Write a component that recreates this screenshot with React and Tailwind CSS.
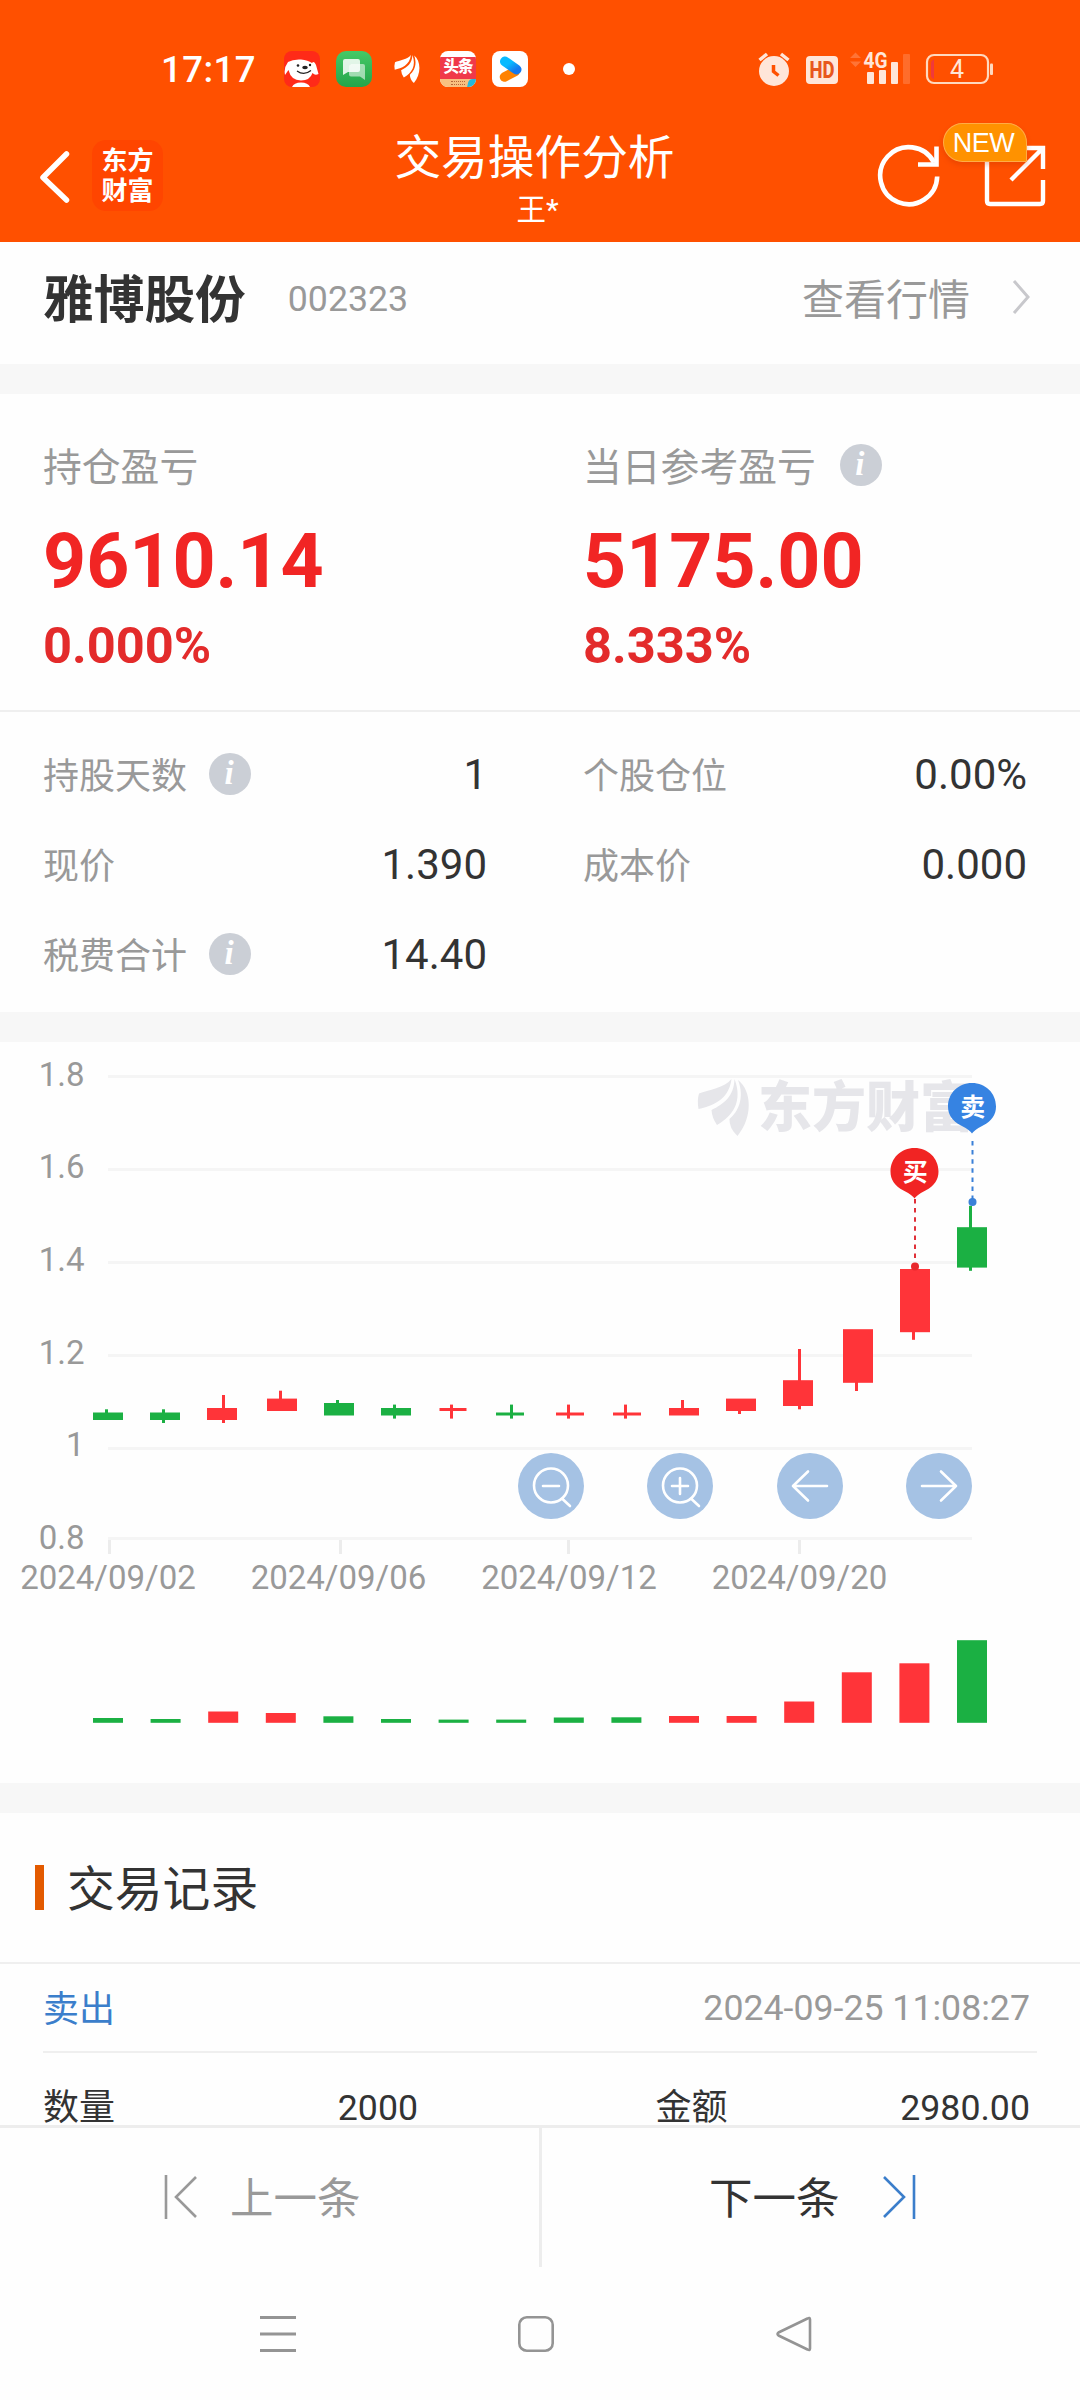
import React from "react";

const RED = "#ff3439";
const GREEN = "#1bb043";

/* x: left edge of the body, w: body width, top/bottom: body, hi/lo: wick ends, wx: wick left edge */
const candles = [
  { c: GREEN, x: 93, w: 30, top: 1412.5, bottom: 1420, hi: 1409.3, lo: 1420, wx: 105 },
  { c: GREEN, x: 150, w: 30, top: 1412.5, bottom: 1420, hi: 1409.3, lo: 1423, wx: 162 },
  { c: RED, x: 207, w: 30, top: 1408, bottom: 1420, hi: 1395, lo: 1423, wx: 222 },
  { c: RED, x: 267, w: 30, top: 1398.6, bottom: 1411, hi: 1390.7, lo: 1411, wx: 279 },
  { c: GREEN, x: 324, w: 30, top: 1403, bottom: 1415.5, hi: 1400, lo: 1415, wx: 336 },
  { c: GREEN, x: 381, w: 30, top: 1408, bottom: 1415.5, hi: 1404.6, lo: 1418.6, wx: 393 },
  { c: RED, x: 439.5, w: 27, top: 1408, bottom: 1411, hi: 1404.6, lo: 1418.6, wx: 450 },
  { c: GREEN, x: 496, w: 28, top: 1412.5, bottom: 1415.5, hi: 1404.6, lo: 1418.6, wx: 510 },
  { c: RED, x: 556, w: 28, top: 1412.5, bottom: 1415.5, hi: 1404.6, lo: 1418.6, wx: 567 },
  { c: RED, x: 613, w: 28, top: 1412.5, bottom: 1415.5, hi: 1404.6, lo: 1418.6, wx: 624 },
  { c: RED, x: 669, w: 30, top: 1408, bottom: 1415.5, hi: 1400, lo: 1415, wx: 681 },
  { c: RED, x: 726, w: 30, top: 1398.6, bottom: 1411, hi: 1399, lo: 1414, wx: 738 },
  { c: RED, x: 783, w: 30, top: 1380.2, bottom: 1406, hi: 1349, lo: 1409.3, wx: 798 },
  { c: RED, x: 843, w: 30, top: 1329.2, bottom: 1382.8, hi: 1330, lo: 1391, wx: 855 },
  { c: RED, x: 900, w: 30, top: 1269, bottom: 1332.2, hi: 1269, lo: 1339.8, wx: 912 },
  { c: GREEN, x: 957, w: 30, top: 1227.2, bottom: 1267.6, hi: 1205.8, lo: 1270.8, wx: 969 },
];

const volumes = [
  [GREEN, 1718], [GREEN, 1719], [RED, 1711.5], [RED, 1713], [GREEN, 1716.3], [GREEN, 1719],
  [GREEN, 1719.6], [GREEN, 1719.6], [GREEN, 1717.5], [GREEN, 1717.3], [RED, 1716], [RED, 1716],
  [RED, 1701.5], [RED, 1672.3], [RED, 1663.3], [GREEN, 1640.2],
];

/* label, line centre, label baseline */
const grid = [
  ["1.8", 1076.5, 1086], ["1.6", 1169.5, 1177.5], ["1.4", 1262.5, 1271],
  ["1.2", 1355.5, 1364], ["1", 1448.5, 1456], ["0.8", 1538.5, 1548.5],
];

const dates = [
  ["2024/09/02", 109.5, 108], ["2024/09/06", 340.5, 338.5], ["2024/09/12", 568.5, 569], ["2024/09/20", 799.5, 799.5],
];

function Feather({ className }) {
  return (
    <svg viewBox="697 1078 53 59" className={className} fill="currentColor">
      <FeatherShape />
    </svg>
  );
}

function FeatherShape() {
  return (
    <g>
      <path d="M731.5 1079C725 1088 708 1090 699 1093.5Q697 1100 698.5 1109C712 1106 729 1100 731.5 1079Z" />
      <path d="M734.5 1079C734 1096 724 1104 711.5 1110Q712 1118 717 1125C733 1116 743 1101 734.5 1079Z" />
      <path d="M738 1080C745 1098 738 1112 729.5 1119Q729 1128 737.5 1136C753 1117 752 1091 738 1080Z" />
    </g>
  );
}

function Info() {
  return (
    <span className="flex h-[42px] w-[42px] shrink-0 items-center justify-center rounded-full bg-[#cbcfd6] pr-[2px] font-['Liberation_Serif',serif] text-[33px] font-bold italic leading-none text-white">
      i
    </span>
  );
}

function StatusBar() {
  return (
    <div className="flex h-[138px] items-center pl-[161px] text-white">
      <span className="w-[123px] whitespace-nowrap pt-[2px] text-[36.5px] font-medium leading-none tracking-[0.5px]">17:17</span>
      <svg className="h-9 w-9" viewBox="0 0 36 36">
        <rect width="36" height="36" rx="8" fill="#ff2a18" />
        <path d="M8 36Q10 31.500 17 31.500Q24 31.500 26 36Z" fill="#fff" />
        <path d="M4 11Q9 8 17 8.500Q24 9 28 12Q30 9 32 14L34.500 23Q31 25 28.500 22Q26 29.500 17 29.500Q7 29.500 4.500 19Q3 21 1 24Q-0.500 17 4 11Z" fill="#fff" />
        <circle cx="14" cy="14.500" r="1.300" fill="#222" />
        <circle cx="26" cy="14" r="1.200" fill="#222" />
        <ellipse cx="21" cy="16.500" rx="2.800" ry="1.800" fill="#222" />
        <path d="M13 20Q20 25 27 19.500" fill="none" stroke="#222" strokeWidth="1.200" />
      </svg>
      <svg className="ml-4 h-9 w-9" viewBox="0 0 36 36">
        <defs>
          <linearGradient id="chat" x1="0" y1="0" x2="0" y2="1">
            <stop offset="0" stopColor="#45c966" />
            <stop offset="1" stopColor="#25a54a" />
          </linearGradient>
        </defs>
        <rect width="36" height="36" rx="10" fill="url(#chat)" />
        <path d="M15 13h12q2 0 2 2v14l-5-3.500h-9q-2 0-2-2v-8q0-2 2-2z" fill="#fff" opacity=".55" />
        <path d="M9 8h13q2 0 2 2v9q0 2-2 2h-10l-5 3V10q0-2 2-2z" fill="#fff" opacity=".85" />
      </svg>
      <Feather className="ml-[22px] h-[30px] w-[26px]" />
      <div className="ml-[20px] flex h-9 w-9 flex-col overflow-hidden rounded-[8px] bg-white pt-[6px]">
        <div className="flex h-[22px] items-center justify-center bg-[#f0394a] text-[15.500px] font-black leading-none tracking-[-1px]">头条</div>
        <div className="flex h-[8px] items-center justify-end bg-[#f8c080]">
          <span className="h-[4px] w-[14px] border-y border-dotted border-[#b8663a]" />
          <span className="ml-[3px] h-[8px] w-[8px] -skew-x-12 rounded-tl-[4px] bg-[#25b8dc]" />
        </div>
      </div>
      <svg className="ml-4 h-9 w-9" viewBox="0 0 36 36">
        <defs>
          <linearGradient id="vid" x1="0" y1="0" x2="1" y2="1">
            <stop offset="0.300" stopColor="#08baff" />
            <stop offset="1" stopColor="#1478ee" />
          </linearGradient>
        </defs>
        <rect width="36" height="36" rx="8" fill="#fff" />
        <path d="M12.500 26L23 20.500" stroke="#ff8200" strokeWidth="9.500" strokeLinecap="round" />
        <path d="M13 10.500L24.500 18.500" stroke="url(#vid)" strokeWidth="10" strokeLinecap="round" />
      </svg>
      <span className="ml-[35px] h-3 w-3 rounded-full bg-white" />
      <svg className="ml-[183px] h-[56px] w-[236px]" viewBox="758 41 236 56">
        <g fill="#ffe6d9">
          <circle cx="774" cy="71" r="15" />
          <path d="M759.500 60L767 54M781 54L788.500 60" stroke="#ffe6d9" strokeWidth="3.500" />
          <path d="M773.500 65v6.500l5 4" fill="none" stroke="#ff5000" strokeWidth="3.500" />
          <rect x="806" y="56" width="32" height="28" rx="4" />
          <rect x="867" y="72" width="7" height="12" rx="1" />
          <rect x="879" y="70" width="7" height="14" rx="1" />
          <rect x="891" y="62" width="7" height="22" rx="1" />
        </g>
        <path d="M850 58L855.500 52.500L861 58ZM850 61.500L855.500 67L861 61.500Z" fill="#ff7436" />
        <rect x="903" y="54" width="7" height="30" rx="1" fill="#ff6d2b" />
        <text x="822" y="78.300" textAnchor="middle" fill="#e8561c" fontSize="23.500" fontWeight="800" textLength="25" lengthAdjust="spacingAndGlyphs">HD</text>
        <text x="863.500" y="67.500" fill="#ffe6d9" fontSize="21.500" fontWeight="700" textLength="24" lengthAdjust="spacingAndGlyphs">4G</text>
        <rect x="927" y="55" width="61" height="28" rx="7" fill="none" stroke="#ffd9bf" strokeWidth="2.200" />
        <path d="M934 59.500v19.500q-3-1-3-4v-11.500q0-3 3-4z" fill="#f0393c" />
        <rect x="990" y="63.500" width="3" height="11.500" rx="1" fill="#ffd9bf" />
        <text x="957" y="78" textAnchor="middle" fill="#ffe6d9" fontSize="25">4</text>
      </svg>
    </div>
  );
}

function TitleBar() {
  return (
    <div className="grid h-[104px] grid-cols-[1fr_400px_1fr]">
      <div className="flex items-start pl-[38px]">
        <svg className="mt-[12px] h-[54px] w-[33px]" viewBox="0 0 33 54" fill="none" stroke="#fff" strokeWidth="5.500" strokeLinecap="round" strokeLinejoin="round">
          <path d="M28.500 4L5 27.500L28.500 50" />
        </svg>
        <div className="ml-[21px] mt-[2px] flex h-[71px] w-[71px] flex-col items-center justify-center rounded-[14px] bg-[#ff4500] text-[26px] font-bold leading-[30px] text-white">
          <span>东方</span>
          <span>财富</span>
        </div>
      </div>
      <div className="-mt-[8px] flex flex-col items-center text-white">
        <h1 className="ml-[-11px] whitespace-nowrap text-[46.700px] font-normal leading-[56px]">交易操作分析</h1>
        <span className="ml-[-5px] mt-[6px] text-[29.500px] leading-[36px]">王*</span>
      </div>
      <div className="relative flex items-start justify-end">
        <svg className="mt-[6px] h-[64px] w-[64px]" viewBox="877 144 64 64" fill="none" stroke="#fff" strokeWidth="4.600">
          <path d="M937.200 176.500A28.500 28.500 0 1 1 934 162.500" />
          <path d="M936.500 146.500V164.500H918" />
        </svg>
        <svg className="ml-[42px] mr-[33px] mt-[6px] h-[64px] w-[64px]" viewBox="983 144 64 64" fill="none" stroke="#fff" strokeWidth="4.400">
          <path d="M987 150V201Q987 204 990 204H1040Q1043 204 1043 201V180" />
          <path d="M1022 148H1043V169M1042 149L1011 180" />
        </svg>
        <div className="absolute right-[53px] top-[-15px] flex h-[39px] w-[84px] items-center justify-center rounded-[20px] rounded-br-[1px] border border-[#ffac45] bg-[#ff9200] pr-[3px] pt-[1px] font-['Liberation_Sans',sans-serif] text-[27px] leading-none tracking-[-0.5px] text-white shadow-[0_3px_5px_rgba(180,40,0,0.25)]">
          NEW
        </div>
      </div>
    </div>
  );
}

function StockRow() {
  return (
    <div className="flex h-[122px] items-center bg-[#fefefe] pb-[6px] pl-[43px] pr-[49px]">
      <span className="pt-[3px] text-[50.700px] font-bold leading-none text-[#333]">雅博股份</span>
      <span className="ml-[42px] text-[35.700px] leading-none text-[#999]">002323</span>
      <span className="ml-auto pt-[1px] text-[42px] leading-none text-[#999]">查看行情</span>
      <svg className="ml-[42px] mt-[-6px] h-[36px] w-[19px]" viewBox="0 0 19 36" fill="none" stroke="#c8c8cc" strokeWidth="3">
        <path d="M2 2L16 18L2 34" />
      </svg>
    </div>
  );
}

function Profit({ label, info, value, pct }) {
  return (
    <div className="flex flex-col">
      <div className="flex h-[60px] items-center gap-[24px] text-[38.800px] text-[#999]">
        <span className="pt-[5px]">{label}</span>
        {info && <span className="-mt-[3px]"><Info /></span>}
      </div>
      <div className="mt-[22px] h-[86px] text-[75.200px] font-bold leading-[86px] text-[#f12524]">{value}</div>
      <div className="mt-[17px] h-[50px] text-[50.600px] font-bold leading-[50px] text-[#e32b2b]">{pct}</div>
    </div>
  );
}

function Stat({ label, info, value }) {
  return (
    <div className="flex h-[90px] items-center text-[36px] leading-none text-[#999]">
      <span className="pt-[3px]">{label}</span>
      {info && <span className="ml-[22px] -mt-[3px]"><Info /></span>}
      <span className="ml-auto text-[42px] text-[#333]">{value}</span>
    </div>
  );
}

function Pin({ cx, top, color, label }) {
  return (
    <g transform={`translate(${cx} ${top})`}>
      <path d="M0 50.500Q-3 46.500 -11 42.500C-20 38 -24 31.500 -24 23.500C-24 10 -13.500 0 0 0S24 10 24 23.500C24 31.500 20 38 11 42.500Q3 46.500 0 50.500Z" fill={color} />
      <text x="0.800" y="32.500" textAnchor="middle" fontSize="25" fontWeight="700" fill="#fff">{label}</text>
    </g>
  );
}

function RoundButton({ children }) {
  return (
    <button className="h-[66px] w-[66px] rounded-full bg-[#a5c2e4]">
      <svg viewBox="0 0 66 66" fill="none" stroke="#fff" strokeWidth="2.600" strokeLinecap="round" strokeLinejoin="round">
        {children}
      </svg>
    </button>
  );
}

function Chart() {
  return (
    <div className="relative h-[741px] bg-[#fefefe]">
      <svg className="block h-[741px] w-[1080px]" viewBox="0 1042 1080 741">
        {grid.map(([t, y, base]) => (
          <g key={t}>
            <rect x="108" y={y - 1.5} width="864" height="3" fill="#f5f5f5" />
            <text x="84.500" y={base} textAnchor="end" fontSize="33" fill="#999">{t}</text>
          </g>
        ))}
        {dates.map(([t, x, tx]) => (
          <g key={t}>
            <rect x={x - 1.5} y="1540" width="3" height="14" fill="#ececec" />
            <text x={tx} y="1589" textAnchor="middle" fontSize="33" fill="#999">{t}</text>
          </g>
        ))}
        <g fill="#e6e6ea">
          <FeatherShape />
          <text x="758" y="1127" fontSize="54" fontWeight="900">东方财富</text>
        </g>
        {candles.map((k, i) => (
          <g key={i} fill={k.c}>
            <rect x={k.wx} y={k.hi} width="3" height={k.lo - k.hi} />
            <rect x={k.x} y={k.top} width={k.w} height={k.bottom - k.top} />
          </g>
        ))}
        {volumes.map(([c, y], i) => (
          <rect key={i} x={93 + i * 57.6} y={y} width="30" height={1722.8 - y} fill={c} />
        ))}
        <path d="M972.500 1141V1199" stroke="#3a80d8" strokeWidth="2" strokeDasharray="4.500 4.600" />
        <circle cx="972.500" cy="1202" r="4" fill="#3a80d8" />
        <path d="M915 1199V1262" stroke="#e03038" strokeWidth="2" strokeDasharray="4.500 4.600" />
        <circle cx="915" cy="1266.500" r="4" fill="#e8282c" />
        <Pin cx={972} top={1083} color="#3683e2" label="卖" />
        <Pin cx={914.5} top={1148} color="#f12423" label="买" />
      </svg>
      <div className="absolute left-[518px] top-[411px] flex gap-[63.300px]">
        <RoundButton>
          <circle cx="33" cy="32.500" r="17" />
          <path d="M25 33H41M44.500 46L52 53" />
        </RoundButton>
        <RoundButton>
          <circle cx="33" cy="32.500" r="17" />
          <path d="M25 33H41M33 25V41M44.500 46L52 53" />
        </RoundButton>
        <RoundButton>
          <path d="M50 33H16M31 18.500L16 33L31 47.500" />
        </RoundButton>
        <RoundButton>
          <path d="M16 33H50M35 18.500L50 33L35 47.500" />
        </RoundButton>
      </div>
    </div>
  );
}

function Records() {
  return (
    <div className="h-[312px] overflow-hidden bg-[#fefefe]">
      <div className="flex h-[151px] items-center border-b-2 border-[#efefef] pl-[35px]">
        <span className="h-[45px] w-[9px] bg-[#e35a00]" />
        <span className="ml-[23px] mt-[6px] text-[47.800px] leading-none text-[#333]">交易记录</span>
      </div>
      <div className="mx-[43px] flex h-[89px] items-center border-b-2 border-[#efefef] pr-[7px] text-[36px] leading-none">
        <span className="pt-[5px] text-[#3b7ecb]">卖出</span>
        <span className="ml-auto pt-[3px] text-[35.700px] text-[#999]">2024-09-25 11:08:27</span>
      </div>
      <div className="grid grid-cols-2 gap-x-[238px] pl-[43px] pr-[50px] pt-[33px] text-[36px] leading-[44px] text-[#333]">
        <div className="flex w-[375px] justify-between"><span>数量</span><span className="text-[35.700px]">2000</span></div>
        <div className="flex justify-between"><span>金额</span><span className="text-[35.700px]">2980.00</span></div>
      </div>
    </div>
  );
}

function Pager() {
  return (
    <div className="flex h-[142px] border-t-[3px] border-[#ededed] bg-[#fefefe] text-[43.500px] leading-none">
      <div className="flex w-[539px] items-start pl-[163px] pt-[46px] text-[#999]">
        <svg className="h-[46px] w-[36px]" viewBox="0 0 36 46" fill="none" stroke="currentColor" strokeWidth="2.600">
          <path d="M3 1V45M33 3L13 23L33 43" />
        </svg>
        <span className="ml-[31px] mt-[4px]">上一条</span>
      </div>
      <div className="w-[3px] bg-[#ededed]" />
      <div className="flex items-start pl-[167px] pt-[46px] text-[#333]">
        <span className="mt-[4px]">下一条</span>
        <svg className="ml-[41px] h-[46px] w-[36px] text-[#3b7ecb]" viewBox="0 0 36 46" fill="none" stroke="currentColor" strokeWidth="2.600">
          <path d="M33 1V45M3 3L23 23L3 43" />
        </svg>
      </div>
    </div>
  );
}

function NavBar() {
  return (
    <div className="flex h-[133px] items-start bg-[#fefefe] pl-[258px] pt-[47px]">
      <svg className="h-10 w-10" viewBox="0 0 40 40" stroke="#949494" strokeWidth="3">
        <path d="M2 3.500H38M2 20H38M2 36.500H38" />
      </svg>
      <svg className="ml-[218px] h-10 w-10" viewBox="0 0 40 40" fill="none" stroke="#949494" strokeWidth="2.600">
        <rect x="3.300" y="3.300" width="33.400" height="33.400" rx="7.500" />
      </svg>
      <svg className="ml-[219px] h-10 w-10" viewBox="0 0 40 40" fill="none" stroke="#949494" strokeWidth="2.600" strokeLinejoin="round">
        <path d="M35 5.500V34.500Q35 37 32.500 35.500L3.500 21.500Q1.500 20 3.500 18.500L32.500 4.500Q35 3 35 5.500Z" />
      </svg>
    </div>
  );
}

export default function App() {
  return (
    <div className="flex h-[2400px] w-[1080px] flex-col overflow-hidden bg-[#fefefe] font-[Roboto,'Noto_Sans_CJK_SC',sans-serif]">
      <header className="h-[242px] bg-[#ff5000]">
        <StatusBar />
        <TitleBar />
      </header>
      <StockRow />
      <div className="h-[30px] bg-[#f7f7f7]" />
      <div className="grid h-[318px] grid-cols-[540px_1fr] border-b-2 border-[#efefef] pl-[43px] pt-[42px]">
        <Profit label="持仓盈亏" value="9610.14" pct="0.000%" />
        <Profit label="当日参考盈亏" info value="5175.00" pct="8.333%" />
      </div>
      <div className="grid h-[300px] grid-cols-[444px_444px] content-start gap-x-[96px] pl-[43px] pt-[18px]">
        <Stat label="持股天数" info value="1" />
        <Stat label="个股仓位" value="0.00%" />
        <Stat label="现价" value="1.390" />
        <Stat label="成本价" value="0.000" />
        <Stat label="税费合计" info value="14.40" />
      </div>
      <div className="h-[30px] bg-[#f7f7f7]" />
      <Chart />
      <div className="h-[30px] bg-[#f7f7f7]" />
      <Records />
      <Pager />
      <NavBar />
    </div>
  );
}
